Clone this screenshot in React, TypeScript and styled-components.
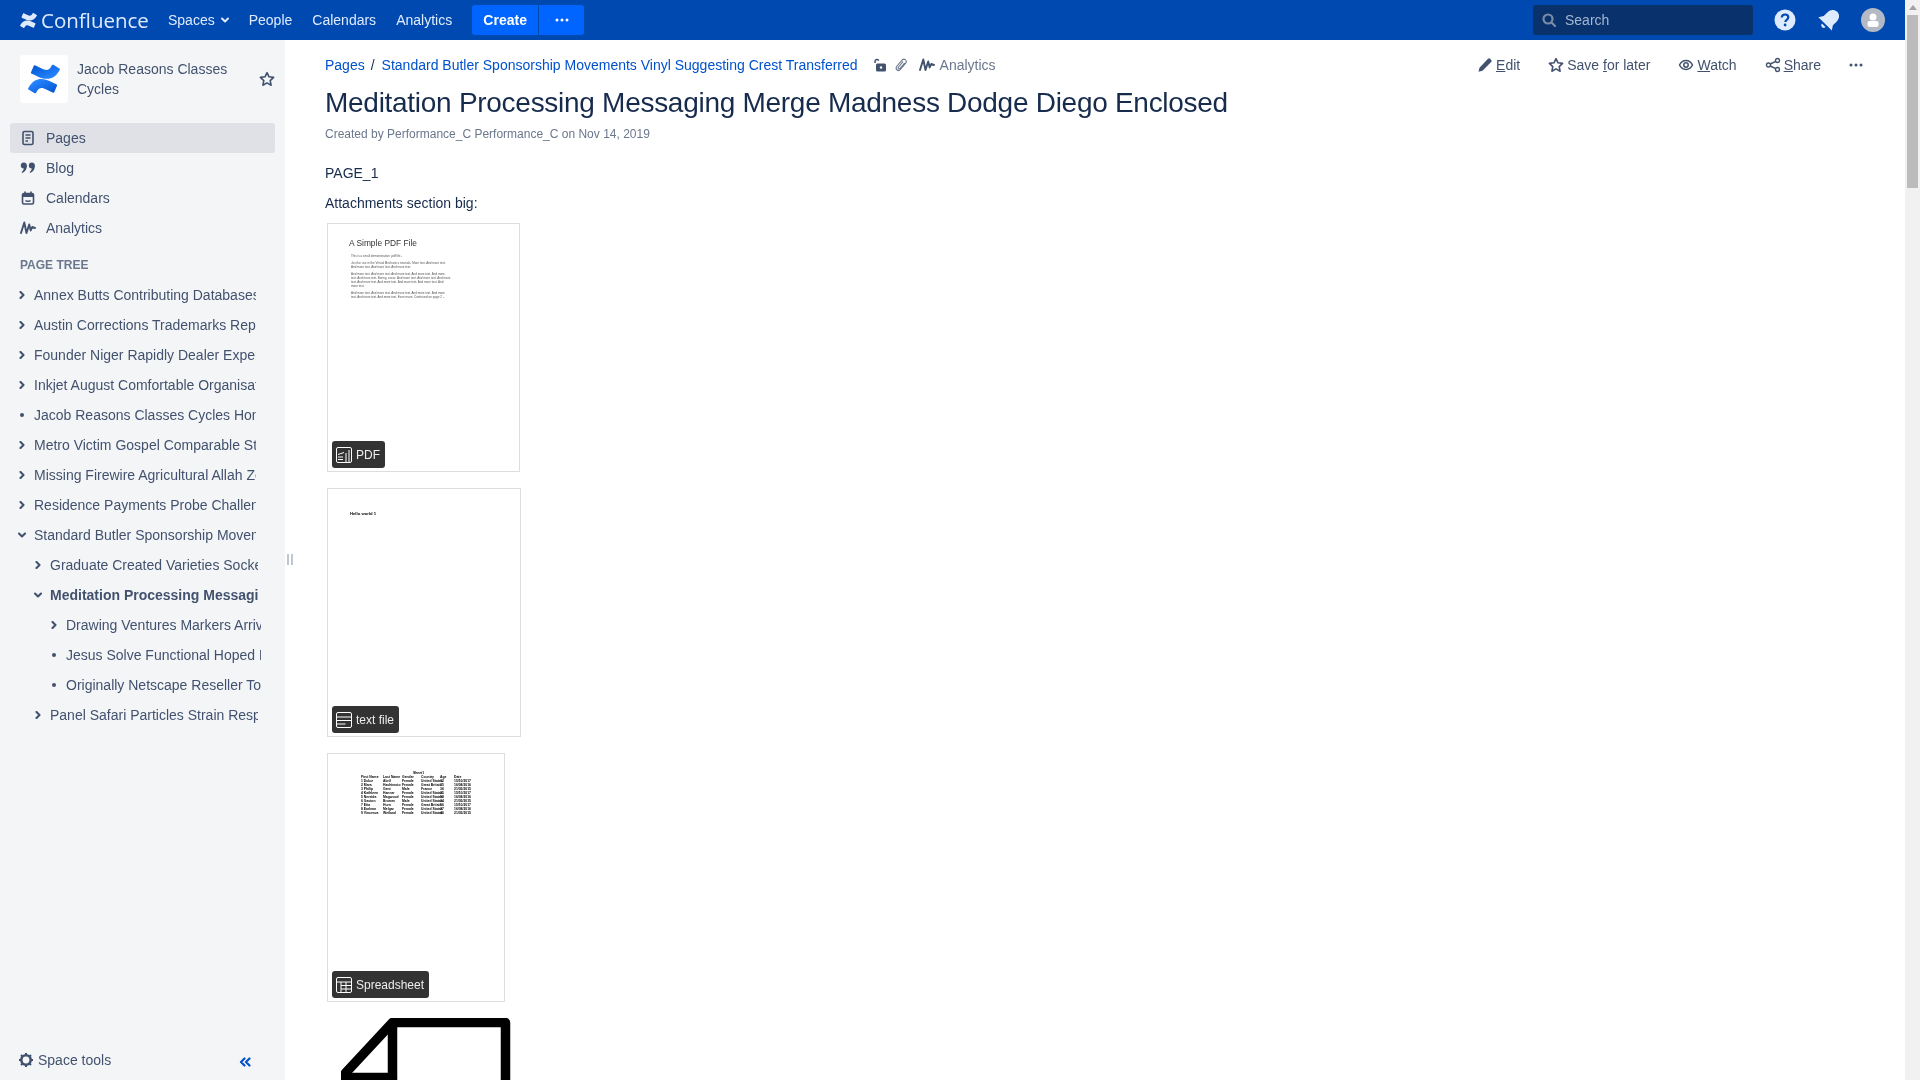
import styled, { createGlobalStyle } from "styled-components";

type TreeRow = {
  title: string;
  level: number;
  kind: "closed" | "open" | "leaf";
  current?: boolean;
};

const TREE: TreeRow[] = [
  { title: "Annex Butts Contributing Databases Transferred", level: 0, kind: "closed" },
  { title: "Austin Corrections Trademarks Reporter Enclosed", level: 0, kind: "closed" },
  { title: "Founder Niger Rapidly Dealer Experiences Tall", level: 0, kind: "closed" },
  { title: "Inkjet August Comfortable Organisation Refinance", level: 0, kind: "closed" },
  { title: "Jacob Reasons Classes Cycles Home", level: 0, kind: "leaf" },
  { title: "Metro Victim Gospel Comparable Strain Perfect", level: 0, kind: "closed" },
  { title: "Missing Firewire Agricultural Allah Zone Lakes", level: 0, kind: "closed" },
  { title: "Residence Payments Probe Challenge Bridges", level: 0, kind: "closed" },
  { title: "Standard Butler Sponsorship Movements Vinyl", level: 0, kind: "open" },
  { title: "Graduate Created Varieties Sockets Trading", level: 1, kind: "closed" },
  { title: "Meditation Processing Messaging Merge Madness", level: 1, kind: "open", current: true },
  { title: "Drawing Ventures Markers Arrival Pending", level: 2, kind: "closed" },
  { title: "Jesus Solve Functional Hoped Relevant", level: 2, kind: "leaf" },
  { title: "Originally Netscape Reseller Told Fixes", level: 2, kind: "leaf" },
  { title: "Panel Safari Particles Strain Response", level: 1, kind: "closed" },
];

const SHEET = [
  ["1 Dulce", "Abril", "Female", "United States", "32", "15/10/2017"],
  ["2 Mara", "Hashimoto", "Female", "Great Britain", "25", "16/08/2016"],
  ["3 Philip", "Gent", "Male", "France", "36", "21/05/2015"],
  ["4 Kathleen", "Hanner", "Female", "United States", "25", "15/10/2017"],
  ["5 Nereida", "Magwood", "Female", "United States", "58", "16/08/2016"],
  ["6 Gaston", "Brumm", "Male", "United States", "24", "21/05/2015"],
  ["7 Etta", "Hurn", "Female", "Great Britain", "56", "15/10/2017"],
  ["8 Earlean", "Melgar", "Female", "United States", "27", "16/08/2016"],
  ["9 Vincenza", "Weiland", "Female", "United States", "40", "21/05/2015"],
];

const AnalyticsIcon = ({ size = 16 }: { size?: number }) => (
  <svg width={size} height={size} viewBox="0 0 16 16" fill="none" stroke="currentColor" strokeWidth="1.9" strokeLinecap="round" strokeLinejoin="round">
    <path d="M1 13 4.300 2.500 6.500 13l2.700-8.500 1.500 6 1.500-3.500 2.800 1" />
  </svg>
);

const Chevron = ({ open }: { open: boolean }) => (
  <svg width="8" height="8" viewBox="0 0 8 8" fill="none" stroke="currentColor" strokeWidth="2.100" strokeLinecap="round" strokeLinejoin="round">
    {open ? <path d="M1 2.500 4 5.500l3-3" /> : <path d="M2.500 1 5.500 4l-3 3" />}
  </svg>
);

const StarIcon = ({ size = 14 }: { size?: number }) => (
  <svg width={size} height={size} viewBox="0 0 16 16" fill="none" stroke="currentColor" strokeWidth="1.600" strokeLinejoin="round">
    <path d="m8 1.600 2 4.200 4.600.6-3.400 3.200.9 4.600L8 11.900l-4.100 2.300.9-4.600L1.400 6.400 6 5.800z" />
  </svg>
);

const ConfluenceMark = ({ size, color }: { size: number; color: string }) => (
  <svg width={size} height={size} viewBox="0 0 32 32" fill={color}>
    <path d="M1.200 23.600c-.4.600-.7 1.200-1 1.600-.2.400-.1.900.3 1.200l6.200 3.800c.4.300 1 .1 1.200-.3.300-.4.600-1 1-1.600 2.600-4.300 5.200-3.800 9.900-1.500l6.200 2.900c.5.200 1 0 1.200-.4l2.900-6.700c.2-.4 0-1-.4-1.200-1.300-.6-3.900-1.800-6.200-2.900C14.700 14.300 6.400 14.700 1.200 23.600z" />
    <path d="M30.800 8.400c.4-.6.7-1.200 1-1.600.2-.4.100-.9-.3-1.200L25.300 1.800c-.4-.3-1-.1-1.200.3-.3.4-.6 1-1 1.600-2.600 4.300-5.200 3.800-9.900 1.500L7 2.300c-.5-.2-1 0-1.200.4L2.900 9.400c-.2.400 0 1 .4 1.200 1.300.6 3.900 1.800 6.200 2.900 7.800 3.800 16.100 3.500 21.300-5.100z" />
  </svg>
);

const BlueMark = () => (
  <svg width="32" height="32" viewBox="0 0 32 32">
    <defs>
      <linearGradient id="cfA" x1="1" y1="1" x2="0.2" y2="0.2">
        <stop offset="0" stopColor="#0052cc" />
        <stop offset="1" stopColor="#2684ff" />
      </linearGradient>
      <linearGradient id="cfB" x1="0" y1="0" x2="0.8" y2="0.8">
        <stop offset="0" stopColor="#0052cc" />
        <stop offset="1" stopColor="#2684ff" />
      </linearGradient>
    </defs>
    <path fill="url(#cfA)" d="M1.200 23.600c-.4.600-.7 1.200-1 1.600-.2.400-.1.900.3 1.200l6.200 3.800c.4.300 1 .1 1.200-.3.300-.4.600-1 1-1.600 2.600-4.300 5.200-3.800 9.900-1.500l6.200 2.900c.5.200 1 0 1.200-.4l2.900-6.700c.2-.4 0-1-.4-1.200-1.300-.6-3.900-1.800-6.200-2.900C14.700 14.300 6.400 14.700 1.200 23.600z" />
    <path fill="url(#cfB)" d="M30.800 8.400c.4-.6.7-1.200 1-1.600.2-.4.100-.9-.3-1.200L25.300 1.800c-.4-.3-1-.1-1.200.3-.3.4-.6 1-1 1.600-2.600 4.300-5.200 3.800-9.900 1.500L7 2.300c-.5-.2-1 0-1.200.4L2.900 9.400c-.2.400 0 1 .4 1.200 1.300.6 3.900 1.800 6.200 2.900 7.800 3.800 16.100 3.500 21.300-5.100z" />
  </svg>
);

const App = () => {
  return (
    <Page>
      <GlobalStyle />
      <Viewport>
        <Header>
          <Brand>
            <ConfluenceMark size={17} color="#deebff" />
            <BrandName>Confluence</BrandName>
          </Brand>
          <NavItem>
            Spaces
            <svg width="10" height="10" viewBox="0 0 10 10" fill="none" stroke="currentColor" strokeWidth="2" strokeLinecap="round" strokeLinejoin="round">
              <path d="M2 3.500 5 6.500l3-3" />
            </svg>
          </NavItem>
          <NavItem>People</NavItem>
          <NavItem>Calendars</NavItem>
          <NavItem>Analytics</NavItem>
          <CreateGroup>
            <CreateButton>Create</CreateButton>
            <CreateMore>
              <Dots color="#fff" />
            </CreateMore>
          </CreateGroup>
          <HeaderRight>
            <SearchBox>
              <svg width="16" height="16" viewBox="0 0 16 16" fill="none" stroke="#7a8ba8" strokeWidth="2.200" strokeLinecap="round">
                <circle cx="7" cy="7" r="4.500" />
                <path d="m10.500 10.500 3.500 3.500" />
              </svg>
              <SearchLabel>Search</SearchLabel>
            </SearchBox>
            <HeaderIcons>
              <svg width="24" height="24" viewBox="0 0 24 24">
                <circle cx="12" cy="12" r="10.500" fill="#deebff" />
                <path d="M8.800 9.500c.1-2 1.500-3 3.300-3 1.900 0 3.200 1.100 3.200 2.800 0 2.500-3 2.500-3 4.700" fill="none" stroke="#0049b0" strokeWidth="2.200" />
                <circle cx="12.100" cy="17" r="1.400" fill="#0049b0" />
              </svg>
              <svg width="24" height="24" viewBox="0 0 24 24" fill="#deebff">
                <g transform="rotate(45 12 12)">
                  <path d="M12 0.500c-4 0-6.500 3-6.500 7v5.500L2.500 17.500h19l-3-4.500V7.500c0-4-2.500-7-6.500-7z" />
                  <path d="M9.500 19.500a2.500 2.500 0 0 0 5 0z" />
                </g>
              </svg>
              <Avatar>
                <svg width="24" height="24" viewBox="0 0 24 24" fill="#fff">
                  <circle cx="12" cy="9" r="3.500" />
                  <rect x="6.500" y="13" width="11" height="6" rx="2" />
                </svg>
              </Avatar>
            </HeaderIcons>
          </HeaderRight>
        </Header>

        <Body>
          <Sidebar>
            <SpaceHead>
              <SpaceLogo>
                <BlueMark />
              </SpaceLogo>
              <SpaceName>Jacob Reasons Classes Cycles</SpaceName>
              <SpaceStar>
                <StarIcon size={16} />
              </SpaceStar>
            </SpaceHead>

            <SideNav>
              <SideLink $active>
                <SideIcon>
                  <svg width="16" height="16" viewBox="0 0 16 16" fill="none" stroke="currentColor" strokeWidth="1.600">
                    <rect x="3" y="1.500" width="10" height="13" rx="1.500" />
                    <path d="M5.500 5h5M5.500 8h5M5.500 11h2.500" />
                  </svg>
                </SideIcon>
                Pages
              </SideLink>
              <SideLink>
                <SideIcon>
                  <svg width="16" height="16" viewBox="0 0 16 16" fill="currentColor">
                    <circle cx="3.800" cy="5.500" r="3" />
                    <circle cx="11.800" cy="5.500" r="3" />
                    <path d="M6.800 5.500c.2 3.600-1.500 6.300-4.600 7.500l-.6-1.100C3.400 10.700 4 9 3.900 7zM14.800 5.500c.2 3.600-1.500 6.300-4.600 7.500l-.6-1.100c1.800-1.200 2.400-2.900 2.300-4.900z" />
                  </svg>
                </SideIcon>
                Blog
              </SideLink>
              <SideLink>
                <SideIcon>
                  <svg width="16" height="16" viewBox="0 0 16 16" fill="none" stroke="currentColor" strokeWidth="1.600">
                    <rect x="2.500" y="3.500" width="11" height="10.500" rx="1.500" />
                    <path d="M2.500 5.500h11" strokeWidth="3" />
                    <path d="M5 1.500v2M11 1.500v2M5.500 10.500c1 1 4 1 5 0" />
                  </svg>
                </SideIcon>
                Calendars
              </SideLink>
              <SideLink>
                <SideIcon>
                  <AnalyticsIcon />
                </SideIcon>
                Analytics
              </SideLink>
            </SideNav>

            <TreeHeading>PAGE TREE</TreeHeading>
            <Tree>
              {TREE.map((row) => (
                <TreeItem key={row.title} $level={row.level}>
                  <Toggle>
                    {row.kind === "leaf" ? <Bullet /> : <Chevron open={row.kind === "open"} />}
                  </Toggle>
                  <TreeTitle $level={row.level} $current={row.current}>
                    {row.title}
                  </TreeTitle>
                </TreeItem>
              ))}
            </Tree>

            <SideFooter>
              <SpaceTools>
                <svg width="16" height="16" viewBox="0 0 16 16" fill="none" stroke="currentColor">
                  <circle cx="8" cy="8" r="4.700" strokeWidth="2.600" />
                  <path d="M8 1v2M8 13v2M1 8h2M13 8h2M3 3l1.500 1.500M11.500 11.500 13 13M13 3l-1.500 1.500M4.500 11.500 3 13" strokeWidth="2" />
                </svg>
                Space tools
              </SpaceTools>
              <Collapse>
                <svg width="12" height="12" viewBox="0 0 12 12" fill="none" stroke="currentColor" strokeWidth="2.200" strokeLinecap="round" strokeLinejoin="round">
                  <path d="M5.500 2.500 2 6l3.500 3.500M10.500 2.500 7 6l3.500 3.500" />
                </svg>
              </Collapse>
            </SideFooter>
            <Splitter />
          </Sidebar>

          <Main>
            <TopRow>
              <Crumbs>
                <Crumb>Pages</Crumb>
                <Slash>/</Slash>
                <Crumb>Standard Butler Sponsorship Movements Vinyl Suggesting Crest Transferred</Crumb>
                <Meta>
                  <svg width="14" height="14" viewBox="0 0 14 14">
                    <path d="M2 5V3.500a2 2 0 0 1 3.800-.9" fill="none" stroke="#42526e" strokeWidth="1.500" />
                    <rect x="3" y="5.500" width="10" height="8" rx="1.500" fill="#42526e" />
                    <circle cx="8" cy="9.500" r="1.200" fill="#fff" />
                  </svg>
                  <svg width="14" height="14" viewBox="0 0 14 14" fill="none" stroke="#6b778c" strokeWidth="1.100" strokeLinecap="round">
                    <path d="M11 1.500c-1-.6-2-.3-2.800.5L3 8c-1.100 1.400-1 3 0 3.900 1 .9 2.400.7 3.400-.4l5.300-6.300c.8-1.100.7-2.400-.1-3.100M8.800 3.800 4.500 9c-.6.700-.5 1.400 0 1.800.5.400 1.100.3 1.700-.4l4.200-5.100" />
                  </svg>
                  <AnalyticsLink>
                    <AnalyticsIcon />
                    Analytics
                  </AnalyticsLink>
                </Meta>
              </Crumbs>
              <Actions>
                <Action>
                  <svg width="16" height="16" viewBox="0 0 16 16" fill="currentColor">
                    <path d="M11 1.800a1.500 1.500 0 0 1 2.100 0l1.100 1.100a1.500 1.500 0 0 1 0 2.100L5.500 13.700l-4 1 1-4z" />
                  </svg>
                  <span>
                    <u>E</u>dit
                  </span>
                </Action>
                <Action>
                  <StarIcon size={16} />
                  <span>
                    Save <u>f</u>or later
                  </span>
                </Action>
                <Action>
                  <svg width="16" height="16" viewBox="0 0 16 16" fill="none" stroke="currentColor" strokeWidth="1.500">
                    <path d="M1.500 8c1.500-3 3.800-4.500 6.500-4.500S13 5 14.500 8c-1.500 3-3.800 4.500-6.500 4.500S3 11 1.500 8z" />
                    <circle cx="8" cy="8" r="2.200" />
                  </svg>
                  <span>
                    <u>W</u>atch
                  </span>
                </Action>
                <Action>
                  <svg width="16" height="16" viewBox="0 0 16 16" fill="none" stroke="currentColor" strokeWidth="1.400">
                    <circle cx="3.500" cy="8" r="2" />
                    <circle cx="12.500" cy="3.500" r="2" />
                    <circle cx="12.500" cy="12.500" r="2" />
                    <path d="m5.300 7 5.400-2.600M5.300 9l5.400 2.600" />
                  </svg>
                  <span>
                    <u>S</u>hare
                  </span>
                </Action>
                <MoreAction>
                  <Dots color="#42526e" />
                </MoreAction>
              </Actions>
            </TopRow>

            <Title>Meditation Processing Messaging Merge Madness Dodge Diego Enclosed</Title>
            <Byline>
              Created by Performance_C Performance_C on Nov 14, 2019
            </Byline>

            <Paragraph>PAGE_1</Paragraph>
            <Paragraph>Attachments section big:</Paragraph>

            <Thumbs>
              <Thumb $width={193}>
                <PdfPage>
                  <PdfHeading>A Simple PDF File</PdfHeading>
                  <PdfText>This is a small demonstration .pdf file -</PdfText>
                  <PdfText>
                    Just for use in the Virtual Mechanics tutorials. More text. And more text. And more text. And more text. And more text.
                  </PdfText>
                  <PdfText>
                    And more text. And more text. And more text. And more text. And more text. And more text. Boring, zzzzz. And more text. And more text. And more text. And more text. And more text. And more text. And more text. And more text.
                  </PdfText>
                  <PdfText>
                    And more text. And more text. And more text. And more text. And more text. And more text. And more text. Even more. Continued on page 2 ...
                  </PdfText>
                </PdfPage>
                <Badge>
                  <svg width="18" height="18" viewBox="0 0 18 18" fill="none" stroke="#fff" strokeWidth="1">
                    <rect x="1.500" y="1.500" width="15" height="15" rx="1.500" />
                    <path d="M3 11h5M3 13.500h5M3 8.500l6-2M11 16V7M14 16V4" />
                  </svg>
                  PDF
                </Badge>
              </Thumb>

              <Thumb $width={194}>
                <TextPage>Hello world 1</TextPage>
                <Badge>
                  <svg width="18" height="18" viewBox="0 0 18 18" fill="none" stroke="#fff" strokeWidth="1">
                    <rect x="1.500" y="1.500" width="15" height="15" rx="1.500" />
                    <path d="M1.500 6h15M1.500 9.500h15M1.500 13h9" />
                  </svg>
                  text file
                </Badge>
              </Thumb>

              <Thumb $width={178}>
                <SheetPage>
                  <SheetTitle>Sheet1</SheetTitle>
                  <SheetGrid>
                    {["First Name", "Last Name", "Gender", "Country", "Age", "Date"].map((h) => (
                      <span key={h}>{h}</span>
                    ))}
                    {SHEET.flat().map((cell, i) => (
                      <span key={i}>{cell}</span>
                    ))}
                  </SheetGrid>
                </SheetPage>
                <Badge>
                  <svg width="18" height="18" viewBox="0 0 18 18" fill="none" stroke="#fff" strokeWidth="1">
                    <rect x="1.500" y="1.500" width="15" height="15" rx="1.500" />
                    <path d="M1.500 6h15M6 6v10.500M6 9.500h10.500M6 13h10.500M11 6v10.500" />
                  </svg>
                  Spreadsheet
                </Badge>
              </Thumb>

              <BigFile width="170" height="200" viewBox="0 0 170 200" fill="none" stroke="#000" strokeWidth="9.500" strokeLinejoin="round">
                <path d="M51.500 4.500H164.500V200H4.500V55z" />
                <path d="M51.500 4.500V59.500H4.500" />
                <path d="M51.500 59.500V200" />
              </BigFile>
            </Thumbs>
          </Main>
        </Body>
      </Viewport>

      <Scrollbar>
        <ScrollArrow />
        <ScrollThumb />
      </Scrollbar>
    </Page>
  );
};

const Dots = ({ color }: { color: string }) => (
  <svg width="14" height="4" viewBox="0 0 14 4" fill={color}>
    <circle cx="2" cy="2" r="1.500" />
    <circle cx="7" cy="2" r="1.500" />
    <circle cx="12" cy="2" r="1.500" />
  </svg>
);

const GlobalStyle = createGlobalStyle`
  html, body {
    margin: 0;
    padding: 0;
    height: 100%;
    overflow: hidden;
    background: #fff;
  }
  body {
    font-family: "Liberation Sans", Arial, sans-serif;
    font-size: 14px;
    line-height: 20px;
    color: #172b4d;
  }
`;

const Page = styled.div`
  display: flex;
  width: 1920px;
  height: 1080px;
  overflow: hidden;
  will-change: transform;
`;
const Viewport = styled.div`
  flex: 1;
  min-width: 0;
  display: flex;
  flex-direction: column;
`;
const Header = styled.header`
  flex: none;
  height: 40px;
  display: flex;
  align-items: center;
  padding-left: 20px;
  background: #0049b0;
  color: #deebff;
`;
const Brand = styled.div`
  display: flex;
  align-items: center;
  gap: 4px;
  width: 138px;
`;
const BrandName = styled.span`
  font-family: "Open Sans", sans-serif;
  font-size: 20.500px;
  line-height: 40px;
`;
const NavItem = styled.div`
  display: flex;
  align-items: center;
  gap: 5px;
  padding: 0 10px;
  font-size: 14px;
  &:nth-of-type(2) {
    padding-right: 9px;
  }
`;
const CreateGroup = styled.div`
  display: flex;
  height: 30px;
  margin-left: 10px;
`;
const CreateButton = styled.div`
  width: 66px;
  display: flex;
  align-items: center;
  justify-content: center;
  background: #0065ff;
  color: #fff;
  font-weight: 700;
  border-radius: 3px 0 0 3px;
`;
const CreateMore = styled.div`
  width: 45px;
  display: flex;
  align-items: center;
  justify-content: center;
  background: #0065ff;
  border-left: 1px solid #0049b0;
  border-radius: 0 3px 3px 0;
`;
const HeaderRight = styled.div`
  margin-left: auto;
  display: flex;
  align-items: center;
  padding-right: 20px;
`;
const SearchBox = styled.div`
  width: 220px;
  height: 30px;
  box-sizing: border-box;
  display: flex;
  align-items: center;
  gap: 8px;
  padding-left: 8px;
  background: #09326c;
  border-radius: 3px;
`;
const SearchLabel = styled.span`
  color: #a5b6d2;
`;
const HeaderIcons = styled.div`
  display: flex;
  align-items: center;
  gap: 20px;
  margin-left: 20px;
`;
const Avatar = styled.div`
  width: 24px;
  height: 24px;
  border-radius: 50%;
  background: #b3bac5;
  overflow: hidden;
`;
const Body = styled.div`
  flex: 1;
  min-height: 0;
  display: flex;
`;
const Sidebar = styled.aside`
  position: relative;
  flex: none;
  width: 285px;
  box-sizing: border-box;
  display: flex;
  flex-direction: column;
  background: #f4f5f7;
  color: #42526e;
`;
const SpaceHead = styled.div`
  display: flex;
  align-items: center;
  padding: 15px 8px 0 20px;
  height: 48px;
`;
const SpaceLogo = styled.div`
  flex: none;
  width: 48px;
  height: 48px;
  display: flex;
  align-items: center;
  justify-content: center;
  background: #fff;
  border-radius: 3px;
`;
const SpaceName = styled.div`
  flex: 1;
  margin-left: 9px;
  width: 170px;
`;
const SpaceStar = styled.div`
  display: flex;
  margin-right: 2px;
`;
const SideNav = styled.nav`
  display: flex;
  flex-direction: column;
  margin: 20px 10px 0;
`;
const SideLink = styled.div<{ $active?: boolean }>`
  height: 30px;
  display: flex;
  align-items: center;
  padding-left: 10px;
  border-radius: 3px;
  background: ${(p) => (p.$active ? "#dfe1e6" : "transparent")};
`;
const SideIcon = styled.span`
  width: 16px;
  display: flex;
  margin-right: 10px;
`;
const TreeHeading = styled.div`
  margin: 14px 0 0 20px;
  font-size: 12px;
  font-weight: 700;
  color: #6b778c;
  line-height: 16px;
`;
const Tree = styled.ul`
  list-style: none;
  margin: 7px 0 0;
  padding: 0;
`;
const TreeItem = styled.li<{ $level: number }>`
  height: 30px;
  display: flex;
  align-items: center;
  padding-left: ${(p) => 18 + p.$level * 16}px;
`;
const Toggle = styled.span`
  flex: none;
  width: 8px;
  height: 8px;
  display: flex;
  align-items: center;
  justify-content: center;
  margin-right: 8px;
`;
const Bullet = styled.span`
  width: 4px;
  height: 4px;
  border-radius: 50%;
  background: #42526e;
`;
const TreeTitle = styled.span<{ $level: number; $current?: boolean }>`
  width: ${(p) => [222, 208, 195][p.$level]}px;
  overflow: hidden;
  white-space: nowrap;
  font-weight: ${(p) => (p.$current ? 700 : 400)};
`;
const SideFooter = styled.div`
  margin-top: auto;
  height: 40px;
  display: flex;
  align-items: center;
  justify-content: space-between;
  padding: 0 34px 0 18px;
`;
const SpaceTools = styled.div`
  display: flex;
  align-items: center;
  gap: 4px;
`;
const Collapse = styled.div`
  display: flex;
  color: #0052cc;
  margin-top: 3px;
`;
const Splitter = styled.div`
  position: absolute;
  left: 287px;
  top: 514px;
  width: 2px;
  height: 11px;
  border-left: 2px solid #c1c7d0;
  border-right: 2px solid #c1c7d0;
`;
const Main = styled.main`
  flex: 1;
  min-width: 0;
  padding: 15px 0 0 40px;
`;
const TopRow = styled.div`
  display: flex;
  align-items: center;
  justify-content: space-between;
  height: 20px;
`;
const Crumbs = styled.div`
  display: flex;
  align-items: center;
`;
const Crumb = styled.a`
  color: #0052cc;
`;
const Slash = styled.span`
  margin: 0 7px 0 6px;
`;
const Meta = styled.div`
  display: flex;
  align-items: center;
  gap: 7px;
  margin-left: 15px;
  color: #6b778c;
`;
const AnalyticsLink = styled.span`
  display: flex;
  align-items: center;
  gap: 5px;
  margin-left: 4px;
  svg {
    color: #42526e;
  }
`;
const Actions = styled.div`
  display: flex;
  align-items: center;
  padding-right: 42px;
  color: #42526e;
  gap: 28px;
`;
const Action = styled.div`
  display: flex;
  align-items: center;
  gap: 3px;
`;
const MoreAction = styled.div`
  display: flex;
  margin-left: 0;
`;
const Title = styled.h1`
  margin: 10px 0 0;
  font-size: 28px;
  font-weight: 400;
  line-height: 36px;
  letter-spacing: -0.01em;
  color: #172b4d;
`;
const Byline = styled.div`
  margin-top: 3px;
  font-size: 12px;
  line-height: 20px;
  color: #6b778c;
`;
const Paragraph = styled.p`
  margin: 10px 0 0;
  line-height: 20px;
  &:first-of-type {
    margin-top: 19px;
  }
`;
const Thumbs = styled.div`
  display: flex;
  flex-direction: column;
  align-items: flex-start;
  gap: 16px;
  margin: 10px 0 0 2px;
`;
const Thumb = styled.div<{ $width: number }>`
  position: relative;
  flex: none;
  width: ${(p) => p.$width}px;
  height: 249px;
  box-sizing: border-box;
  border: 1px solid #ddd;
  overflow: hidden;
`;
const Badge = styled.div`
  position: absolute;
  left: 4px;
  bottom: 3px;
  height: 27px;
  display: flex;
  align-items: center;
  gap: 3px;
  padding: 0 5px 0 3px;
  border-radius: 3px;
  background: #333;
  color: #eee;
  font-size: 12px;
`;
const PdfPage = styled.div`
  padding: 14px 68px 0 21px;
`;
const PdfHeading = styled.div`
  font-size: 8.400px;
  line-height: 11px;
  color: #333;
  margin-bottom: 4.500px;
`;
const PdfText = styled.div`
  margin: 0 0 3px 2px;
  font-size: 3px;
  line-height: 4px;
  color: #555;
`;
const TextPage = styled.div`
  padding: 22px 0 0 22px;
  font-size: 4.200px;
  line-height: 6px;
  font-weight: 700;
  color: #000;
`;
const SheetPage = styled.div`
  padding: 17px 0 0 33px;
  color: #000;
`;
const SheetTitle = styled.div`
  width: 115px;
  font-size: 3.400px;
  line-height: 4px;
  font-weight: 700;
  text-align: center;
`;
const SheetGrid = styled.div`
  display: grid;
  grid-template-columns: 22px 19px 19px 19px 14px 21px;
  font-size: 3.400px;
  line-height: 4px;
  font-weight: 700;
  white-space: nowrap;
`;
const BigFile = styled.svg`
  flex: none;
  margin-left: 14px;
  display: block;
`;
const Scrollbar = styled.div`
  flex: none;
  width: 15px;
  display: flex;
  flex-direction: column;
  align-items: center;
  background: #f1f1f1;
`;
const ScrollArrow = styled.div`
  margin-top: 5px;
  width: 0;
  height: 0;
  border-left: 4px solid transparent;
  border-right: 4px solid transparent;
  border-bottom: 5px solid #a3a3a3;
`;
const ScrollThumb = styled.div`
  width: 11px;
  height: 173px;
  margin-top: 5px;
  background: #bbb;
`;

export default App;
